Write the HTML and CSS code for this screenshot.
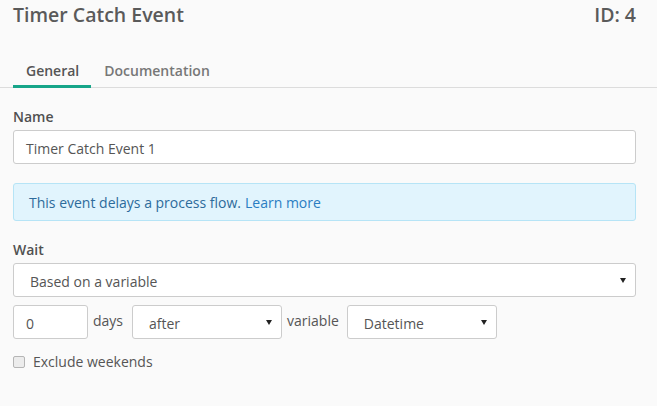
FILE: index.html
```html
<!DOCTYPE html>
<html>
<head>
<meta charset="utf-8">
<link rel="stylesheet" href="styles.css">
</head>
<body>
<div class="panel">
  <div class="header">
    <h1 class="title">Timer Catch Event</h1>
    <div class="id">ID: 4</div>
  </div>
  <div class="tabs">
    <div class="tab active">General</div>
    <div class="tab">Documentation</div>
  </div>
  <div class="form">
    <div class="label first">Name</div>
    <div class="input wide">Timer Catch Event 1</div>
    <div class="info">This event delays a process flow. <span class="link">Learn more</span></div>
    <div class="label">Wait</div>
    <div class="select wide"><span class="sel-text">Based on a variable</span><span class="arrow"></span></div>
    <div class="row">
      <div class="input num">0</div>
      <span class="word">days</span>
      <div class="select after"><span class="sel-text">after</span><span class="arrow"></span></div>
      <span class="word">variable</span>
      <div class="select dt"><span class="sel-text">Datetime</span><span class="arrow"></span></div>
    </div>
    <div class="check-row">
      <span class="checkbox"></span>
      <span class="check-label">Exclude weekends</span>
    </div>
  </div>
</div>
</body>
</html>
```
FILE: styles.css
```css
html, body {
  margin: 0;
  padding: 0;
  background: #fafafa;
  font-family: "Open Sans", "Noto Sans", sans-serif;
  color: #555;
}
.panel {
  width: 657px;
  height: 406px;
  overflow: hidden;
}
.header {
  display: flex;
  justify-content: space-between;
  align-items: baseline;
  padding: 1px 21px 0 13px;
}
.title {
  margin: 0;
  font-size: 19.5px;
  font-weight: 600;
  color: #5a5a5a;
  line-height: 27px;
}
.id {
  font-size: 19.5px;
  font-weight: 600;
  color: #5a5a5a;
}
.tabs {
  display: flex;
  margin-top: 33px;
  border-bottom: 1px solid #dcdcdc;
}
.tab {
  font-size: 14px;
  font-weight: 600;
  color: #777;
  padding: 0 0 5px;
  margin-left: 13px;
  line-height: 19px;
  border-bottom: 3px solid transparent;
  margin-bottom: -1px;
}
.tab.active {
  color: #555;
  border-bottom-color: #17a589;
  padding-left: 13px;
  padding-right: 12px;
}
.form {
  padding: 0 21px 0 13px;
}
.label {
  font-size: 14px;
  font-weight: 600;
  color: #505050;
  margin-top: 20px;
  line-height: 18px;
  margin-bottom: 4px;
}
.input, .select {
  box-sizing: border-box;
  height: 34px;
  border: 1px solid #ccc;
  border-radius: 3px;
  background: #fff;
  font-size: 14px;
  color: #555;
  display: flex;
  align-items: center;
}
.input {
  padding: 2px 0 0 12px;
}
.select {
  padding: 0 9px 0 16px;
  justify-content: space-between;
}
.sel-text {
  padding-top: 3px;
}
.arrow {
  width: 0;
  height: 0;
  border-left: 3px solid transparent;
  border-right: 3px solid transparent;
  border-top: 5px solid #222;
  margin-top: 1px;
}
.info {
  margin-top: 19px;
  box-sizing: border-box;
  height: 38px;
  border: 1px solid #b6e4f6;
  border-radius: 3px;
  background: #e1f4fd;
  color: #2d6b9b;
  font-size: 14px;
  display: flex;
  align-items: center;
  padding-left: 15px;
}
.link {
  color: #2a7dc2;
  margin-left: 4px;
}
.row {
  display: flex;
  align-items: center;
  margin-top: 8px;
  font-size: 14px;
}
.num {
  width: 75px;
}
.word {
  padding: 0 5px;
  margin-top: -4px;
  color: #555;
}
.after {
  width: 150px;
  margin-left: 4px;
}
.dt {
  width: 150px;
  margin-left: 3px;
}
.check-row {
  display: flex;
  align-items: center;
  margin-top: 13px;
  font-size: 14px;
  line-height: 20px;
}
.checkbox {
  box-sizing: border-box;
  width: 12px;
  height: 12px;
  border: 1px solid #b5b5b5;
  border-radius: 2px;
  background: #ececec;
  margin-right: 8px;
}
.check-label {
  color: #555;
}
```
